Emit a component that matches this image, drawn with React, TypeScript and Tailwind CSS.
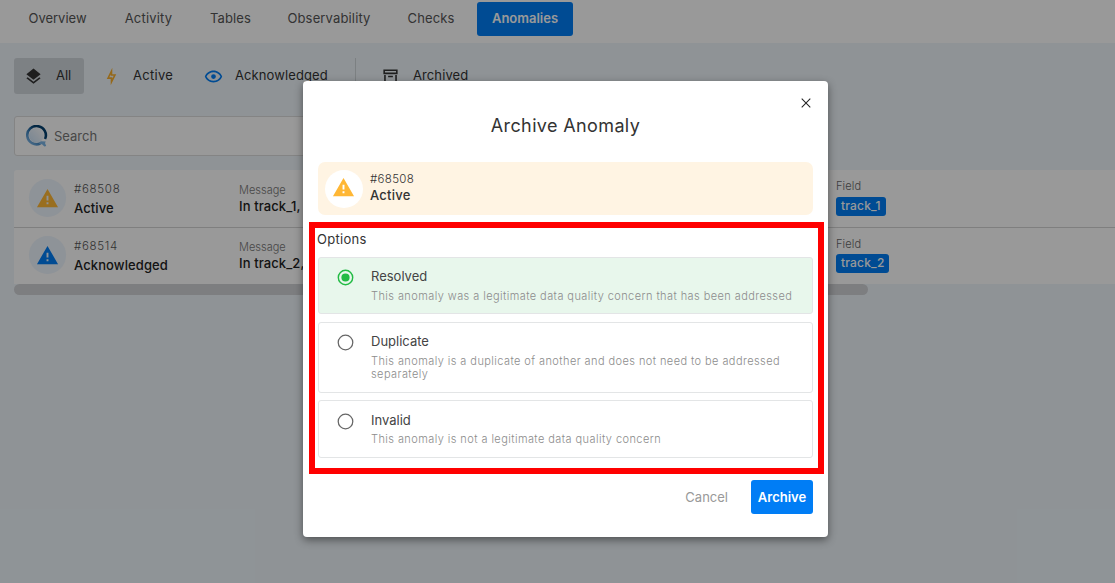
import type { ReactNode } from "react";

const paths = {
  layers: "M12,16L19.36,10.27L21,9L12,2L3,9L4.63,10.27M12,18.54L4.62,12.81L3,14.07L12,21.07L21,14.07L19.37,12.8L12,18.54Z",
  bolt: "M11 9.47V11H14.76L13 14.53V13H9.24L11 9.47M13 1L6 15H11V23L18 9H13V1Z",
  eye: "M12,9A3,3 0 0,1 15,12A3,3 0 0,1 12,15A3,3 0 0,1 9,12A3,3 0 0,1 12,9M12,4.5C17,4.5 21.27,7.61 23,12C21.27,16.39 17,19.5 12,19.5C7,19.5 2.73,16.39 1,12C2.73,7.61 7,4.5 12,4.5M3.18,12C4.83,15.36 8.24,17.5 12,17.5C15.76,17.5 19.17,15.36 20.82,12C19.17,8.64 15.76,6.5 12,6.5C8.24,6.5 4.83,8.64 3.18,12Z",
  archive: "M20 21H4V10H6V19H18V10H20V21M3 3H21V9H3V3M9.5 11H14.5C14.78 11 15 11.22 15 11.5V13H9V11.5C9 11.22 9.22 11 9.5 11M5 5V7H19V5H5Z",
  alert: "M13 14H11V9H13M13 18H11V16H13M1 21H23L12 2L1 21Z",
  close: "M19,6.1L17.9,5L12,10.9L6.1,5L5,6.1L10.9,12L5,17.9L6.1,19L12,13.1L17.9,19L19,17.9L13.1,12Z",
  radioOff: "M12,20.4A8.4,8.4 0 0,1 3.6,12A8.4,8.4 0 0,1 12,3.6A8.4,8.4 0 0,1 20.4,12A8.4,8.4 0 0,1 12,20.4M12,2A10,10 0 0,0 2,12A10,10 0 0,0 12,22A10,10 0 0,0 22,12A10,10 0 0,0 12,2Z",
  radioOn: "M12,20.2A8.2,8.2 0 0,1 3.8,12A8.2,8.2 0 0,1 12,3.8A8.2,8.2 0 0,1 20.2,12A8.2,8.2 0 0,1 12,20.2M12,2A10,10 0 0,0 2,12A10,10 0 0,0 12,22A10,10 0 0,0 22,12A10,10 0 0,0 12,2M12,6.8A5.2,5.2 0 0,0 6.8,12A5.2,5.2 0 0,0 12,17.2A5.2,5.2 0 0,0 17.2,12A5.2,5.2 0 0,0 12,6.8Z",
};

function Icon({ name, className }: { name: keyof typeof paths; className: string }) {
  return (
    <svg viewBox="0 0 24 24" fill="currentColor" className={`shrink-0 ${className}`}>
      <path d={paths[name]} />
    </svg>
  );
}

function QLogo() {
  return (
    <svg viewBox="0 0 22 22" className="h-[22px] w-[22px] shrink-0" fill="none">
      <defs>
        <linearGradient id="ring" x1="4" y1="19" x2="17" y2="5" gradientUnits="userSpaceOnUse">
          <stop offset="0" stopColor="#7cb4e4" />
          <stop offset="0.45" stopColor="#3a7fba" />
          <stop offset="0.8" stopColor="#04406f" />
        </linearGradient>
        <linearGradient id="core" x1="5" y1="16" x2="16" y2="6" gradientUnits="userSpaceOnUse">
          <stop offset="0" stopColor="#cfe3f6" />
          <stop offset="1" stopColor="#f6f9fd" />
        </linearGradient>
      </defs>
      <circle cx="10.4" cy="10.3" r="7.4" fill="url(#core)" />
      <path d="M19 14A9.3 9.1 0 1 0 14.3 18.5" stroke="url(#ring)" strokeWidth="2.6" />
      <path d="M13 19l1.6-2.8 5.2.2-.8 1.7 1.2 3-1.8.4-2.4-2.2z" fill="#7cb4e4" />
    </svg>
  );
}

const nav = [
  { label: "Overview", box: "w-[89px]" },
  { label: "Activity", box: "w-[79px] tracking-[0.2px]" },
  { label: "Tables", box: "w-[71px] tracking-[0.1px]" },
  { label: "Observability", box: "w-[112px] tracking-[0.15px]" },
  { label: "Checks", box: "w-[78px] tracking-[0.1px]" },
];

function Row({ id, status, tone, message, field, fieldClass, className }: {
  id: string; status: string; tone: string; message: string; field: string; fieldClass: string; className: string;
}) {
  return (
    <div className={`flex pl-[15px] ${className}`}>
      <div className="mt-[9px] flex h-[38px] w-[37px] items-center justify-center rounded-full bg-[#edf5fd]">
        <Icon name="alert" className={`h-[23px] w-[23px] ${tone}`} />
      </div>
      <div className="ml-2 w-[165px] pt-[11px]">
        <div className="text-[11.5px] leading-4 font-light tracking-[0.7px] text-[#555]">#{id}</div>
        <div className="mt-[3px] text-[13px] leading-4 font-medium tracking-[0.1px] text-[#222]">{status}</div>
      </div>
      <div className="w-[597px] pt-[12px] whitespace-nowrap">
        <div className="text-[11px] leading-4 font-light text-[#777]">Message</div>
        <div className="text-[13px] leading-4 font-medium tracking-[0.1px] text-[#222]">{message}</div>
      </div>
      <div className={fieldClass}>
        <div className="text-[11px] leading-4 font-light tracking-[0.1px] text-[#666]">Field</div>
        <div className="flex h-[19px] items-center rounded-[3px] bg-[#007df5] px-[5px] pb-px text-xs font-medium tracking-[0.2px] text-white">
          {field}
        </div>
      </div>
    </div>
  );
}

function Option({ title, checked, className, children }: {
  title: string; checked?: boolean; className: string; children: ReactNode;
}) {
  return (
    <div className={`flex rounded-[3px] border border-[#e3e5e6] pl-[16.5px] ${className}`}>
      <Icon
        name={checked ? "radioOn" : "radioOff"}
        className={`mt-[9.5px] h-[19px] w-[19px] ${checked ? "text-[#22bb44]" : "text-[#666]"}`}
      />
      <div className="ml-[16.5px] pt-[10px]">
        <div className="text-[13px] leading-4 text-[#444]">{title}</div>
        <div className="mt-[6px] text-[11px] leading-[13px] font-light tracking-[0.42px] whitespace-nowrap text-[#8c8c8c]">{children}</div>
      </div>
    </div>
  );
}

export default function App() {
  return (
    <div className="relative h-[583px] w-[1115px] overflow-hidden bg-[#eff6fb] font-['Inter',sans-serif] text-[#333]">
      <header className="flex h-[43px] gap-[7px] bg-white pt-[2px] pl-[13px]">
        {nav.map((n) => (
          <div key={n.label} className={`flex h-[34px] items-center justify-center text-[13px] text-[#555] ${n.box}`}>
            {n.label}
          </div>
        ))}
        <div className="flex h-[34px] w-[96px] items-center justify-center rounded-[3px] bg-[#007df5] text-[13px] font-semibold text-white">
          Anomalies
        </div>
      </header>

      <div className="mt-[15px] ml-[14px] flex h-[36px] items-center text-[13px] text-[#333]">
        <div className="flex h-[36px] w-[70px] items-center rounded-[3px] bg-[#d1d7dc] pl-[10px]">
          <Icon name="layers" className="h-[19px] w-[19px] text-[#333]" />
          <span className="ml-[13px]">All</span>
        </div>
        <Icon name="bolt" className="ml-[18px] h-[19px] w-[19px] text-[#f9af2e]" />
        <span className="ml-[12px] w-[70.5px] tracking-[0.3px]">Active</span>
        <Icon name="eye" className="h-[19px] w-[19px] text-[#007df5]" />
        <span className="ml-[12.5px] w-[120px] tracking-[0.1px]">Acknowledged</span>
        <div className="h-[36px] w-px bg-[#cfd5d9]" />
        <Icon name="archive" className="ml-[25px] h-[19px] w-[19px] text-[#333]" />
        <span className="ml-[13px] tracking-[0.1px]">Archived</span>
      </div>

      <div className="mt-[22px] ml-[14px] flex h-10 w-[500px] items-center rounded-[3px] border border-[#dcdcdc] bg-white pl-[11px] text-[13px] text-[#777]">
        <QLogo />
        <span className="ml-[6px] pt-px">Search</span>
      </div>

      <div className="mt-[14px] ml-[14px] rounded-tl-[3px] bg-white">
        <Row id="68508" status="Active" tone="text-[#ffb735]" message="In track_1, " field="track_1" fieldClass="pt-2 [&>div:last-child]:mt-[3px]" className="h-[58px] border-b border-[#d4d4d4]" />
        <Row id="68514" status="Acknowledged" tone="text-[#007df5]" message="In track_2, " field="track_2" fieldClass="pt-[9px] [&>div:last-child]:mt-[2px]" className="-mt-px h-[57px]" />
      </div>
      <div className="ml-[14px] h-[11px] w-[854px] rounded-full bg-[#d0d2d6]" />

      <div className="absolute inset-0 bg-black/40" />

      <div className="absolute top-[81px] left-[303px] flex h-[456px] w-[525px] flex-col rounded-[4px] bg-white px-[15px] shadow-[0_3px_8px_rgba(0,0,0,0.45)]">
        <div className="-mr-px flex h-[35px] items-center justify-end pt-[9px]">
          <Icon name="close" className="h-4 w-4 text-[#222]" />
        </div>
        <h1 className="text-center text-lg leading-5 tracking-[0.37px] text-[#333]">Archive Anomaly</h1>
        <div className="mt-[26px] flex h-[53px] items-center rounded-[7px] bg-[#fff4e3] pl-[7px]">
          <div className="flex h-[38px] w-[38px] items-center justify-center rounded-full bg-white">
            <Icon name="alert" className="-mt-[3px] mr-px h-[23px] w-[23px] text-[#ffb735]" />
          </div>
          <div className="ml-[7px] pb-[3px]">
            <div className="text-[11.5px] leading-4 font-light tracking-[0.3px] text-[#333]">#68508</div>
            <div className="text-[13px] leading-4 font-medium tracking-[0.25px] text-[#333]">Active</div>
          </div>
        </div>
        <div className="-ml-px mt-[16px] text-[13px] leading-4 tracking-[0.3px] text-[#333]">Options</div>
        <Option title="Resolved" checked className="mt-[10px] h-[57px] bg-[#e8f7ec]">
          This anomaly was a legitimate data quality concern that has been addressed
        </Option>
        <Option title="Duplicate" className="mt-2 h-[71px]">
          This anomaly is a duplicate of another and does not need to be addressed
          <br />
          separately
        </Option>
        <Option title="Invalid" className="mt-[7px] h-[58px] pt-px [&>div>div:last-child]:mt-[5px]">
          This anomaly is not a legitimate data quality concern
        </Option>
        <div className="mt-[22px] flex items-center justify-end text-[13px]">
          <span className="pt-px text-[#999]">Cancel</span>
          <div className="ml-[23px] flex h-[34px] w-[62px] items-center justify-center rounded-[3px] bg-[#007df5] pt-px font-semibold text-white">
            Archive
          </div>
        </div>
      </div>

      <div className="absolute top-[222px] left-[309px] h-[252px] w-[515px] border-[6px] border-[#ff0000]" />
    </div>
  );
}
